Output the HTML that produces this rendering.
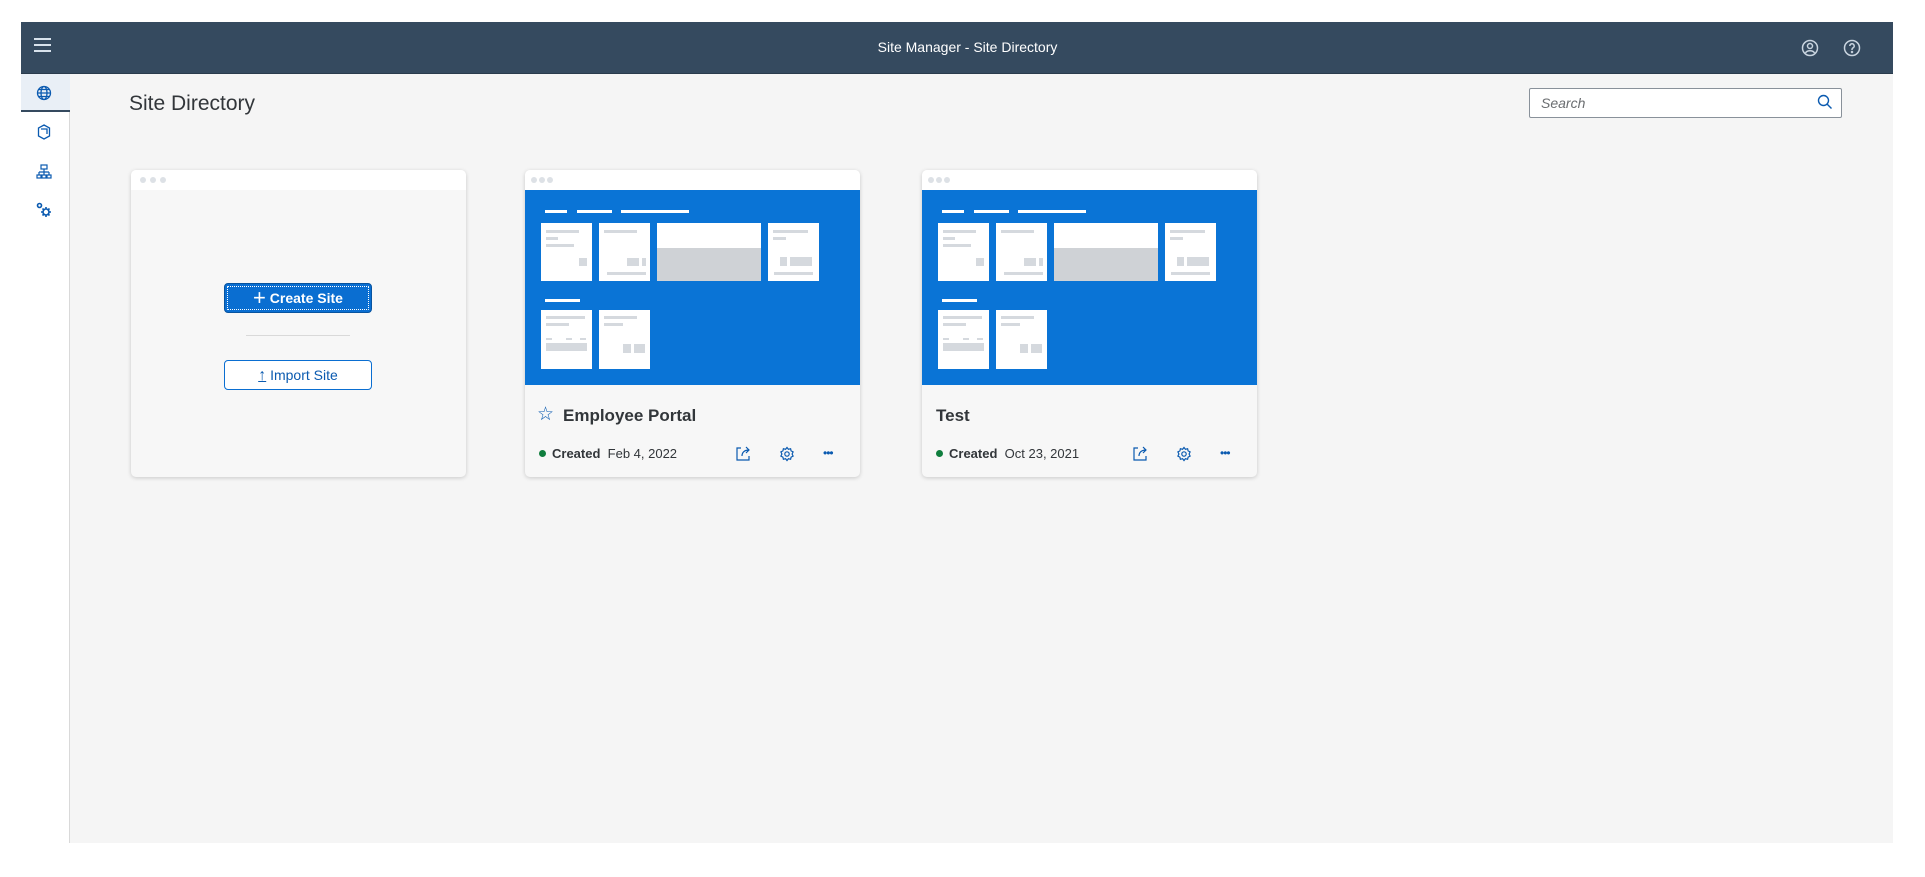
<!DOCTYPE html>
<html><head><style>
*{margin:0;padding:0;box-sizing:border-box}
body{width:1925px;height:877px;background:#fff;font-family:"Liberation Sans",sans-serif;position:relative;overflow:hidden}
.abs{position:absolute}
.hdr{left:21px;top:22px;width:1872px;height:52px;background:#354a5f;border-bottom:1px solid #2a3b4c}
.app{left:21px;top:74px;width:1872px;height:769px;background:#f5f5f5}
.side{left:21px;top:74px;width:49px;height:769px;background:#fff;border-right:1px solid #d9d9d9}
.card{position:absolute;top:170px;width:335px;height:307px;background:#f7f7f7;border-radius:5px;box-shadow:0 1px 4px rgba(0,0,0,.18);overflow:hidden}
.tb{height:20px;background:#fff;position:relative}
.tb i{position:absolute;top:7px;width:6px;height:6px;border-radius:3px;background:#dde1e6}
.blue{position:absolute;left:0;top:20px;width:335px;height:195px;background:#0a74d6}
.w{position:absolute;background:#fff}
.g{position:absolute;background:#d5d9de}
.t{position:absolute;font-size:17px;font-weight:bold;color:#32363a}
.st{position:absolute;top:276px;font-size:13px;color:#32363a}
.dot{display:inline-block;width:7px;height:7px;border-radius:4px;background:#107e3e;margin-right:6px;vertical-align:1px}
</style></head><body>
<div class="abs hdr"></div>
<div class="abs" style="left:34px;top:38px;width:17px;height:2px;background:#d8e2ec;box-shadow:0 6px 0 #d8e2ec,0 12px 0 #d8e2ec"></div>
<div class="abs" style="left:0;width:1925px;top:39px;text-align:center;color:#fff;font-size:14px;padding-left:10px">Site Manager - Site Directory</div>
<svg class="abs" style="left:1801px;top:39px" width="18" height="18" viewBox="0 0 18 18" fill="none" stroke="#c9d4df" stroke-width="1.5"><circle cx="9" cy="9" r="7.5"/><circle cx="9" cy="7" r="2.5"/><path d="M4.5 14c1.5-3 7.5-3 9 0"/></svg>
<svg class="abs" style="left:1843px;top:39px" width="18" height="18" viewBox="0 0 18 18" fill="none" stroke="#c9d4df" stroke-width="1.5"><circle cx="9" cy="9" r="7.5"/><path d="M6.8 7a2.2 2.2 0 1 1 3 2c-.8.4-.8 1-.8 2"/><circle cx="9" cy="13" r=".5"/></svg>
<div class="abs app"></div>
<div class="abs side"></div>
<div class="abs" style="left:21px;top:74px;width:49px;height:38px;background:#e9eff6;border-bottom:2px solid #354a5f"></div>
<svg class="abs" style="left:36px;top:85px" width="16" height="16" viewBox="0 0 16 16" fill="none" stroke="#0a5ab0" stroke-width="1.3"><circle cx="8" cy="8" r="6.5"/><ellipse cx="8" cy="8" rx="3" ry="6.5"/><path d="M1.5 8h13M2.5 4.5h11M2.5 11.5h11"/></svg>
<svg class="abs" style="left:37px;top:124px" width="14" height="16" viewBox="0 0 14 16" fill="none" stroke="#0a5ab0" stroke-width="1.3"><path d="M7 1l5.5 3v8L7 15 1.5 12V4z"/><path d="M4 5h6v5"/></svg>
<svg class="abs" style="left:36px;top:164px" width="16" height="16" viewBox="0 0 16 16" fill="none" stroke="#0a5ab0" stroke-width="1.2"><rect x="5" y="1" width="6" height="4"/><path d="M8 5v3M3 8h10M3 8v3M8 8v3M13 8v3"/><rect x="1" y="11" width="4" height="3"/><rect x="6" y="11" width="4" height="3"/><rect x="11" y="11" width="4" height="3"/></svg>
<svg class="abs" style="left:36px;top:202px" width="16" height="16" viewBox="0 0 16 16" fill="none" stroke="#0a5ab0" stroke-width="1.6"><circle cx="3.5" cy="3.5" r="2"/><circle cx="10" cy="10" r="3"/><path d="M10 5v2M10 13v2M5 10h2M13 10h2M6.5 6.5l1.4 1.4M12 12l1.5 1.5M13.5 6.5L12 8M6.5 13.5L8 12"/></svg>
<div class="abs" style="left:129px;top:92px;font-size:21px;color:#32363a">Site Directory</div>
<div class="abs" style="left:1529px;top:88px;width:313px;height:30px;background:#fff;border:1px solid #89919a;border-radius:2px"></div>
<div class="abs" style="left:1541px;top:95px;font-size:14px;font-style:italic;color:#6a6d70">Search</div>
<svg class="abs" style="left:1817px;top:94px" width="16" height="16" viewBox="0 0 16 16" fill="none" stroke="#0a5ab0" stroke-width="1.4"><circle cx="6.5" cy="6.5" r="5"/><path d="M10 10l4.5 4.5"/></svg>

<div class="card" style="left:131px">
<div class="tb"><i style="left:9px"></i><i style="left:19px"></i><i style="left:29px"></i></div>
<div style="position:absolute;left:93px;top:113px;width:148px;height:30px;background:#0a6ed1;border:1px solid #0854a0;border-radius:4px;outline:1px dotted #fff;outline-offset:-4px;color:#fff;font-weight:bold;font-size:14px;text-align:center;line-height:28px"><span style="font-size:22px;font-weight:normal;vertical-align:-2px">+</span> Create Site</div>
<div style="position:absolute;left:115px;top:165px;width:104px;height:1px;background:#d9d9d9"></div>
<div style="position:absolute;left:93px;top:190px;width:148px;height:30px;background:#fff;border:1px solid #0a6ed1;border-radius:4px;color:#0a5ab0;font-size:14px;text-align:center;line-height:28px"><span style="font-size:16px;text-decoration:underline">↑</span> Import Site</div>
</div>

<div class="card" style="left:525px" id="c2"></div>
<div class="card" style="left:922px" id="c3"></div>
<script>
function fill(el,title,date,star){
 var h='<div class="tb"><i style="left:6px"></i><i style="left:14px"></i><i style="left:22px"></i></div><div class="blue">';
 h+='<div class="w" style="left:20px;top:0;height:3px;width:22px;top:20px"></div><div class="w" style="left:52px;top:20px;height:3px;width:35px"></div><div class="w" style="left:96px;top:20px;height:3px;width:68px"></div>';
 h+='<div class="w" style="left:16px;top:33px;width:51px;height:58px"><div class="g" style="left:5px;top:7px;width:33px;height:3px"></div><div class="g" style="left:5px;top:14px;width:12px;height:3px"></div><div class="g" style="left:5px;top:21px;width:28px;height:3px"></div><div class="g" style="left:38px;top:35px;width:8px;height:8px"></div></div>';
 h+='<div class="w" style="left:74px;top:33px;width:51px;height:58px"><div class="g" style="left:5px;top:7px;width:33px;height:3px"></div><div class="g" style="left:28px;top:35px;width:12px;height:8px"></div><div class="g" style="left:43px;top:35px;width:4px;height:8px"></div><div class="g" style="left:8px;top:49px;width:39px;height:3px"></div></div>';
 h+='<div class="w" style="left:132px;top:33px;width:104px;height:58px"><div class="g" style="left:0;top:25px;width:104px;height:33px;background:#cfd2d6"></div></div>';
 h+='<div class="w" style="left:243px;top:33px;width:51px;height:58px"><div class="g" style="left:5px;top:7px;width:35px;height:3px"></div><div class="g" style="left:5px;top:14px;width:13px;height:3px"></div><div class="g" style="left:12px;top:34px;width:7px;height:9px"></div><div class="g" style="left:22px;top:34px;width:22px;height:9px"></div><div class="g" style="left:6px;top:49px;width:39px;height:3px"></div></div>';
 h+='<div class="w" style="left:20px;top:109px;height:3px;width:35px"></div>';
 h+='<div class="w" style="left:16px;top:120px;width:51px;height:59px"><div class="g" style="left:5px;top:6px;width:39px;height:3px"></div><div class="g" style="left:5px;top:13px;width:23px;height:3px"></div><div class="g" style="left:5px;top:28px;width:6px;height:2px"></div><div class="g" style="left:25px;top:28px;width:6px;height:2px"></div><div class="g" style="left:39px;top:28px;width:6px;height:2px"></div><div class="g" style="left:5px;top:33px;width:41px;height:8px"></div></div>';
 h+='<div class="w" style="left:74px;top:120px;width:51px;height:59px"><div class="g" style="left:5px;top:6px;width:33px;height:3px"></div><div class="g" style="left:5px;top:13px;width:19px;height:3px"></div><div class="g" style="left:24px;top:34px;width:8px;height:9px"></div><div class="g" style="left:35px;top:34px;width:11px;height:9px"></div></div></div>';
 var tx=star?38:14;
 if(star)h+='<div style="position:absolute;left:12px;top:233px;color:#0a5ab0;font-size:19px">☆</div>';
 h+='<div class="t" style="left:'+tx+'px;top:236px">'+title+'</div>';
 h+='<div class="st" style="left:14px"><span class="dot"></span><b>Created</b>&nbsp; '+date+'</div>';
 h+='<svg style="position:absolute;left:210px;top:276px" width="16" height="16" viewBox="0 0 16 16" fill="none" stroke="#0a5ab0" stroke-width="1.2"><path d="M6 2H2v12h12v-4"/><path d="M7 10c0-4 3-6 7-6M11 1l3 3-3 3"/></svg>';
 h+='<svg style="position:absolute;left:254px;top:276px" width="16" height="16" viewBox="0 0 16 16" fill="none" stroke="#0a5ab0" stroke-width="1.2"><circle cx="8" cy="8" r="2.2"/><path d="M8 1.5l1.4 1.8 2.2-.6.5 2.2 2 1-1 2.1 1 2.1-2 1-.5 2.2-2.2-.6L8 14.5l-1.4-1.8-2.2.6-.5-2.2-2-1 1-2.1-1-2.1 2-1 .5-2.2 2.2.6z"/></svg>';
 h+='<div style="position:absolute;left:298px;top:276px;color:#0a5ab0;font-size:12px;letter-spacing:-1px">•••</div>';
 el.innerHTML=h;
}
fill(document.getElementById('c2'),'Employee Portal','Feb 4, 2022',true);
fill(document.getElementById('c3'),'Test','Oct 23, 2021',false);
</script>
</body></html>
